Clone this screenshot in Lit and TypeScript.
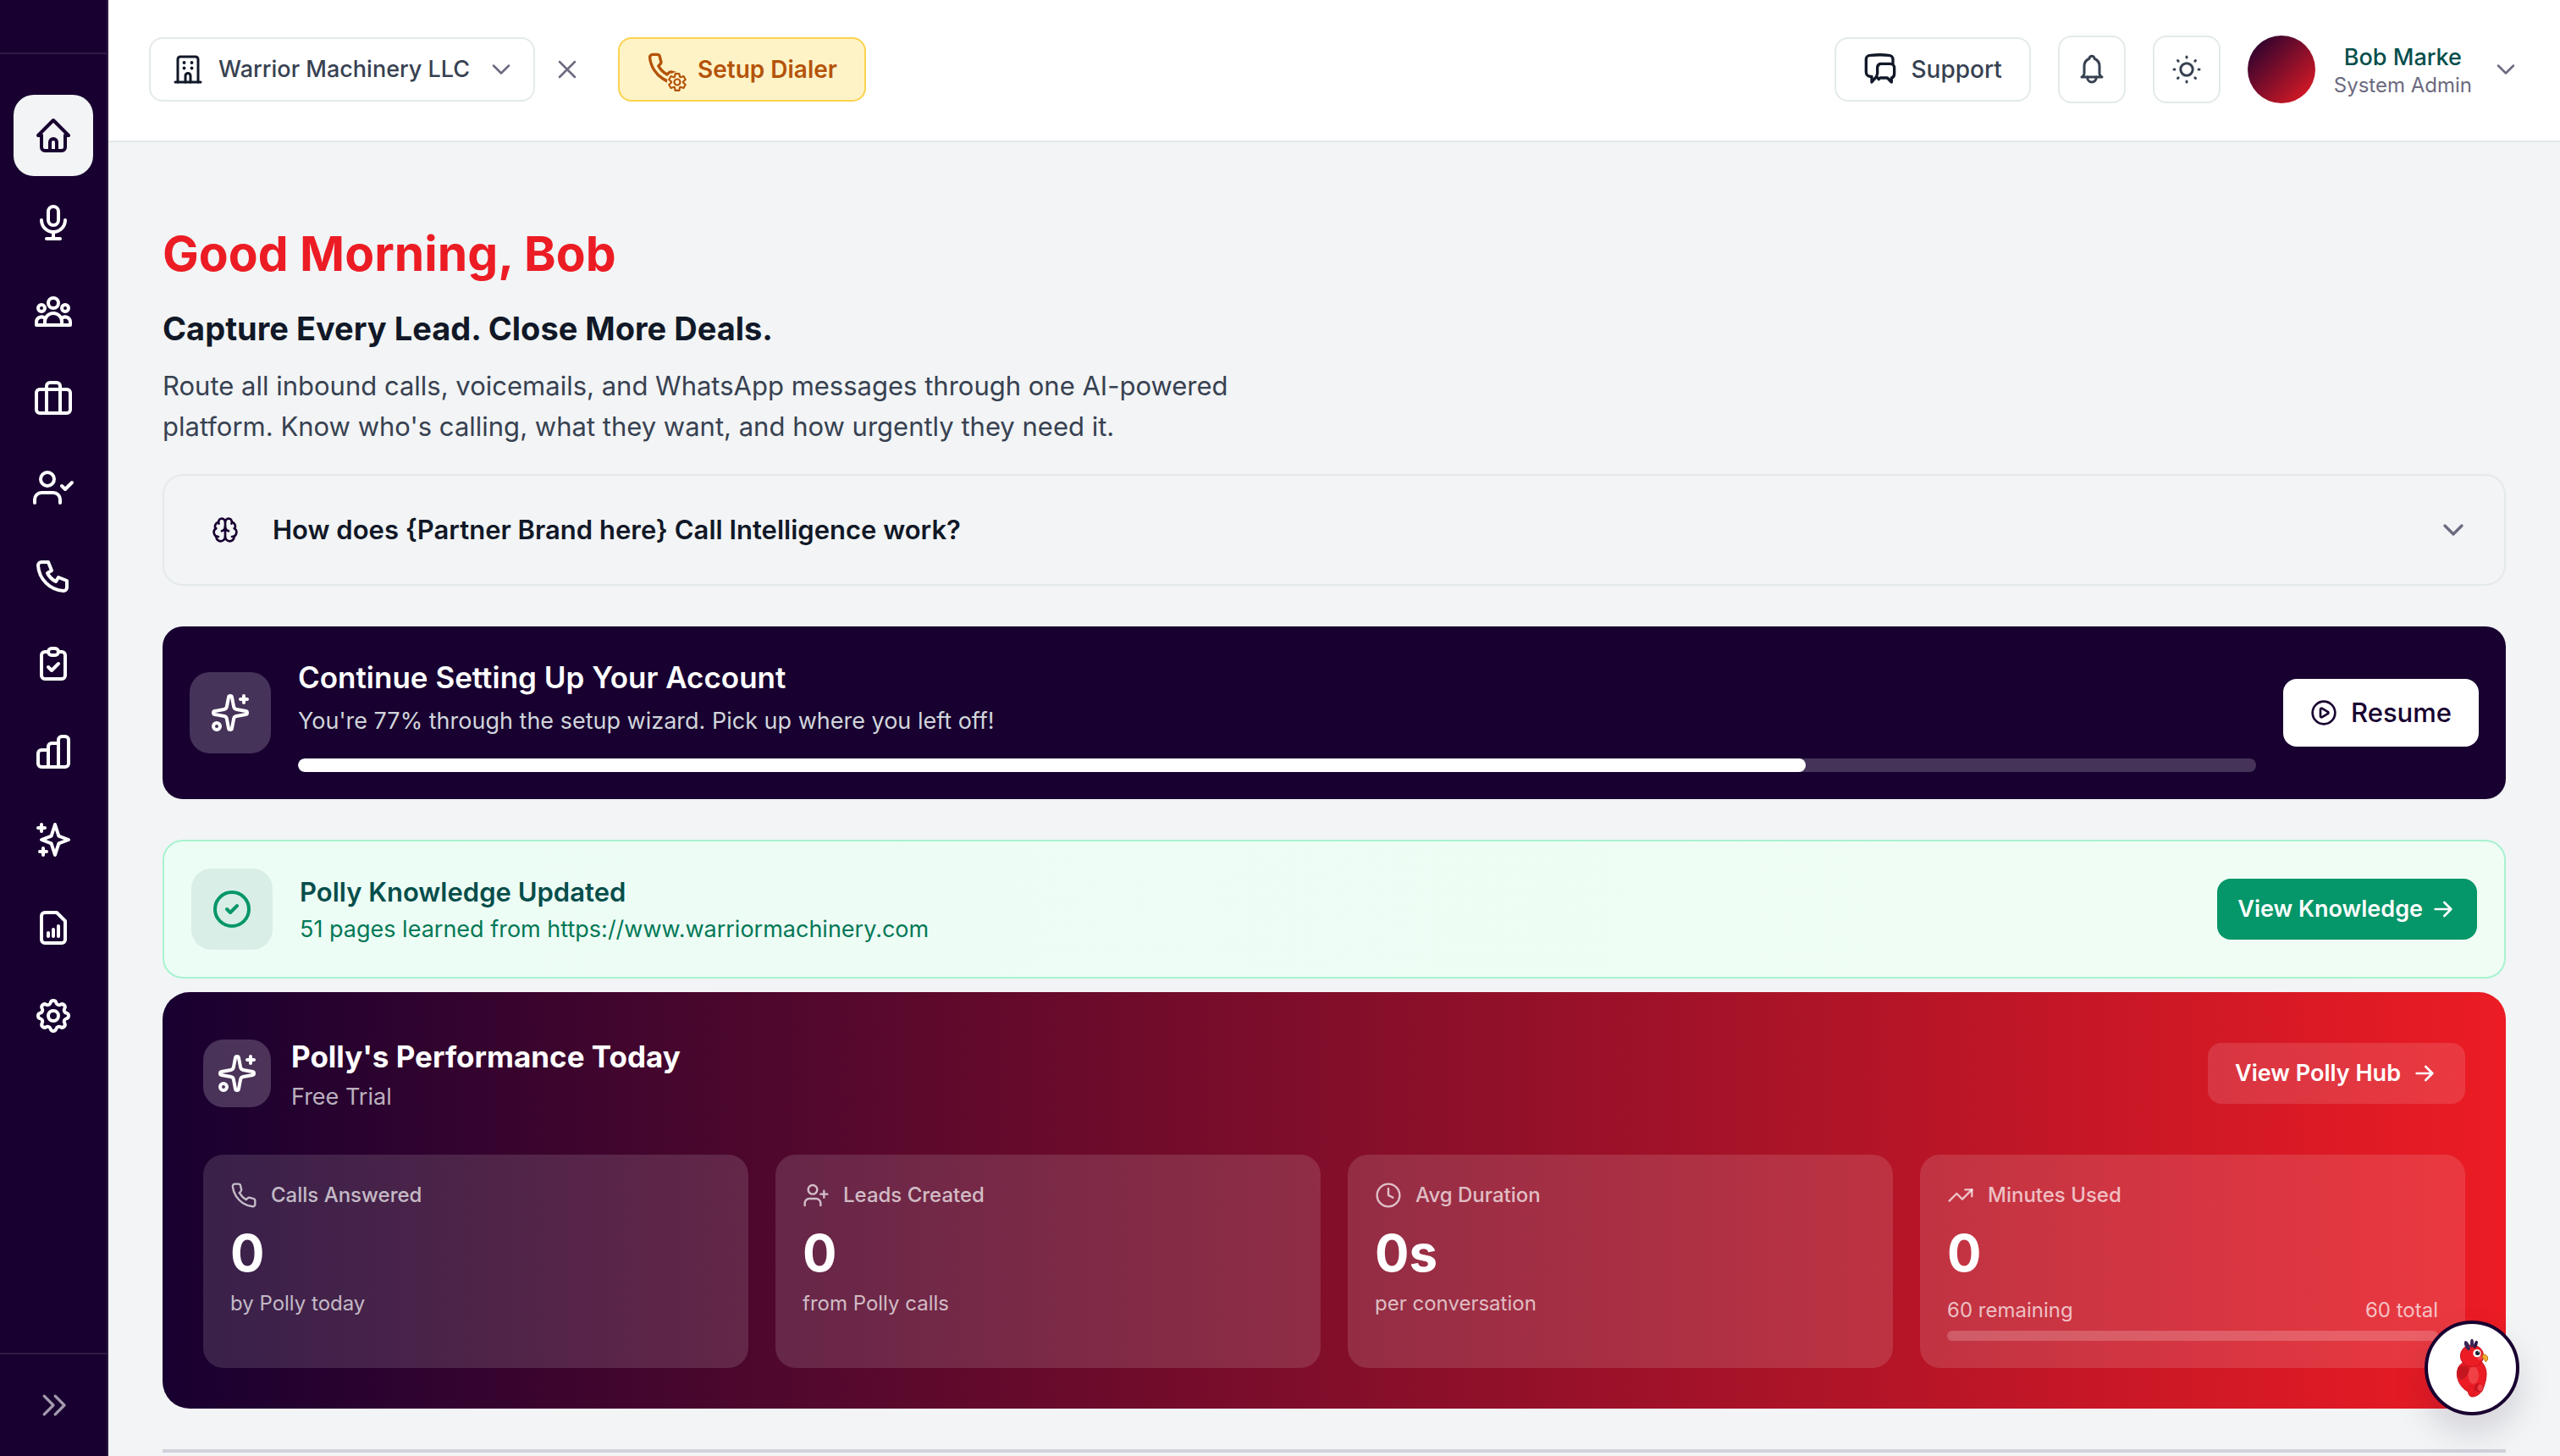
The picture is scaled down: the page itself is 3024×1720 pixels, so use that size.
import { LitElement, html, css, svg, type SVGTemplateResult } from "lit";
import { customElement, property, state } from "lit/decorators.js";

const p = (...paths: string[]) => paths.map((d) => svg`<path d=${d}></path>`);

const PHONE =
  "M22 16.92v3a2 2 0 0 1-2.18 2 19.79 19.79 0 0 1-8.63-3.07 19.5 19.5 0 0 1-6-6 19.79 19.79 0 0 1-3.07-8.67A2 2 0 0 1 4.11 2h3a2 2 0 0 1 2 1.72c.13.96.36 1.9.7 2.81a2 2 0 0 1-.45 2.11L8.09 9.91a16 16 0 0 0 6 6l1.27-1.27a2 2 0 0 1 2.11-.45c.91.34 1.85.57 2.81.7A2 2 0 0 1 22 16.92z";
const GEAR =
  "M10.325 4.317c.426-1.756 2.924-1.756 3.35 0a1.724 1.724 0 0 0 2.573 1.066c1.543-.94 3.31.826 2.37 2.37a1.724 1.724 0 0 0 1.065 2.572c1.756.426 1.756 2.924 0 3.35a1.724 1.724 0 0 0-1.066 2.573c.94 1.543-.826 3.31-2.37 2.37a1.724 1.724 0 0 0-2.572 1.065c-.426 1.756-2.924 1.756-3.35 0a1.724 1.724 0 0 0-2.573-1.066c-1.543.94-3.31-.826-2.37-2.37a1.724 1.724 0 0 0-1.065-2.572c-1.756-.426-1.756-2.924 0-3.35a1.724 1.724 0 0 0 1.066-2.573c-.94-1.543.826-3.31 2.37-2.37 1 .608 2.296.07 2.572-1.065z";

/** Outline of a six-toothed cog centred on the origin. */
const COG =
  "M" +
  Array.from({ length: 6 }, (_, k) =>
    [
      [-26, 7],
      [-13, 10.2],
      [13, 10.2],
      [26, 7],
    ].map(([turn, r]) => {
      const a = ((k * 60 - 90 + turn) * Math.PI) / 180;
      return `${(r * Math.cos(a)).toFixed(2)} ${(r * Math.sin(a)).toFixed(2)}`;
    }),
  )
    .flat()
    .join("L") +
  "Z";

const ICONS: Record<string, SVGTemplateResult[] | SVGTemplateResult> = {
  home: p(
    "M5 12H3l9-9 9 9h-2",
    "M5 12v7a2 2 0 0 0 2 2h10a2 2 0 0 0 2-2v-7",
    "M10 21v-5a2 2 0 0 1 2-2 2 2 0 0 1 2 2v5",
  ),
  mic: p(
    "M9 5a3 3 0 0 1 6 0v5a3 3 0 0 1-6 0z",
    "M5 10a7 7 0 0 0 14 0",
    "M8 21h8",
    "M12 17v4",
  ),
  group: svg`
    <circle cx="12" cy="7" r="3"></circle>
    <circle cx="5" cy="10" r="2"></circle>
    <circle cx="19" cy="10" r="2"></circle>
    <path d="M7 20v-2a5 5 0 0 1 10 0v2z"></path>
    <path d="M7 20H2v-2a3 3 0 0 1 5-2"></path>
    <path d="M17 20h5v-2a3 3 0 0 0-5-2"></path>`,
  briefcase: svg`
    <rect x="2" y="6" width="20" height="14" rx="2"></rect>
    <path d="M16 20V4a2 2 0 0 0-2-2h-4a2 2 0 0 0-2 2v16"></path>`,
  userCheck: svg`
    <path d="M16 21v-2a4 4 0 0 0-4-4H5a4 4 0 0 0-4 4v2"></path>
    <circle cx="8.5" cy="7" r="4"></circle>
    <path d="M17 11l2 2 4-4"></path>`,
  userPlus: svg`
    <path d="M16 21v-2a4 4 0 0 0-4-4H6a4 4 0 0 0-4 4v2"></path>
    <circle cx="9" cy="7" r="4"></circle>
    <path d="M19 8v6M22 11h-6"></path>`,
  handset: p(
    "M5 4h4l2 5-2.5 1.5a11 11 0 0 0 5 5L15 13l5 2v4a2 2 0 0 1-2 2A16 16 0 0 1 3 6a2 2 0 0 1 2-2",
  ),
  clipboard: p(
    "M9 5H7a2 2 0 0 0-2 2v12a2 2 0 0 0 2 2h10a2 2 0 0 0 2-2V7a2 2 0 0 0-2-2h-2",
    "M9 5a2 2 0 0 1 2-2h2a2 2 0 0 1 0 4h-2a2 2 0 0 1-2-2z",
    "M9 14l2 2 4-4",
  ),
  bars: p(
    "M9 21H5a2 2 0 0 1-2-2v-6a2 2 0 0 1 2-2h4z",
    "M15 21H9V9a2 2 0 0 1 2-2h4z",
    "M15 21V5a2 2 0 0 1 2-2h2a2 2 0 0 1 2 2v14a2 2 0 0 1-2 2z",
  ),
  stars: p(
    "M13 3l2.2 6.8L21 12l-5.8 2.2L13 21l-2.2-6.8L5 12l5.8-2.2z",
    "M5 3v4M3 5h4",
    "M6 17v4M4 19h4",
  ),
  report: p(
    "M14 3H7a2 2 0 0 0-2 2v14a2 2 0 0 0 2 2h10a2 2 0 0 0 2-2V8z",
    "M9 17v-2M12 17v-4M15 17v-6",
  ),
  gear: svg`<path d=${GEAR}></path><circle cx="12" cy="12" r="3"></circle>`,
  expand: p("M7 7l5 5-5 5", "M13 7l5 5-5 5"),
  chevron: p("M6 9l6 6 6-6"),
  close: p("M18 6L6 18M6 6l12 12"),
  arrow: p("M5 12h14M13 6l6 6-6 6"),
  building: svg`
    <path d="M2 22h20"></path>
    <path d="M4 22V4a2 2 0 0 1 2-2h12a2 2 0 0 1 2 2v18"></path>
    <path d="M10 22v-5a2 2 0 0 1 4 0v5"></path>
    <path stroke-width="2.6" d="M9 6.7h.01M15 6.7h.01M9 11h.01M15 11h.01"></path>`,
  dialer: svg`
    <mask id="cut" maskUnits="userSpaceOnUse" x="0" y="0" width="48" height="52">
      <rect width="48" height="52" fill="#fff" stroke="none"></rect>
      <circle cx="36" cy="39" r="12" fill="#000" stroke="none"></circle>
    </mask>
    <g mask="url(#cut)"><path transform="translate(0 3) scale(1.7)" d=${PHONE}></path></g>
    <g transform="translate(36 39)" stroke-width="2.2"><path d=${COG}></path><circle r="3.5"></circle></g>`,
  chats: p(
    "M9 17.5l-3 3.5v-4H5a3 3 0 0 1-3-3V5a3 3 0 0 1 3-3c5-.5 9-.5 13 0a3 3 0 0 1 3 3v3",
    "M12 8h7a3 3 0 0 1 3 3v4a3 3 0 0 1-2 3v3l-3-3h-5a2 2 0 0 0-1 1 3 3 0 0 1-1-4v-4a3 3 0 0 1 2-3z",
  ),
  bell: p(
    "M10 3.5a2 2 0 0 1 4 0 6.5 6.5 0 0 1 4 6v4.5a4 4 0 0 0 2 4H4a4 4 0 0 0 2-4V9.5a6.5 6.5 0 0 1 4-6",
    "M8.5 18v.5a3.5 3.5 0 0 0 7 0V18",
  ),
  sun: svg`
    <circle cx="12" cy="12" r="4.8"></circle>
    <path d="M12 2v.6M12 21.4v.6M2 12h.6M21.4 12h.6M5 5l.4.4M18.6 18.6l.4.4M19 5l-.4.4M5.4 18.6l-.4.4"></path>`,
  brain: p(
    "M12 18V5",
    "M15 13a4.17 4.17 0 0 1-3-4 4.17 4.17 0 0 1-3 4",
    "M17.598 6.5A3 3 0 1 0 12 5a3 3 0 1 0-5.598 1.5",
    "M17.997 5.125a4 4 0 0 1 2.526 5.77",
    "M18 18a4 4 0 0 0 2-7.464",
    "M19.967 17.483A4 4 0 1 1 12 18a4 4 0 1 1-7.967-.517",
    "M6 18a4 4 0 0 1-2-7.464",
    "M6.003 5.125a4 4 0 0 0-2.526 5.77",
  ),
  sparkle: svg`
    <path d="M11.017 2.814a1 1 0 0 1 1.966 0l1.051 5.558a2 2 0 0 0 1.594 1.594l5.558 1.051a1 1 0 0 1 0 1.966l-5.558 1.051a2 2 0 0 0-1.594 1.594l-1.051 5.558a1 1 0 0 1-1.966 0l-1.051-5.558a2 2 0 0 0-1.594-1.594l-5.558-1.051a1 1 0 0 1 0-1.966l5.558-1.051a2 2 0 0 0 1.594-1.594z"></path>
    <path d="M20 2v4M22 4h-4"></path>
    <circle cx="4" cy="20" r="2"></circle>`,
  play: svg`
    <circle cx="12" cy="12" r="10"></circle>
    <path d="M9 9a1 1 0 0 1 1.5-.9l5 3a1 1 0 0 1 0 1.8l-5 3A1 1 0 0 1 9 15z"></path>`,
  check: svg`<circle cx="12" cy="12" r="10"></circle><path d="M9 12l2 2 4-4"></path>`,
  phone: p(PHONE),
  clock: svg`<circle cx="12" cy="12" r="10"></circle><path d="M12 6v6l4 2"></path>`,
  trend: p("M22 7l-8.5 8.5-5-5L2 17", "M16 7h6v6"),
};

@customElement("ui-icon")
export class UiIcon extends LitElement {
  @property() name = "home";
  @property() box = "0 0 24 24";

  static styles = css`
    :host {
      display: block;
      flex: none;
      width: 32px;
      height: 32px;
      stroke-width: 2;
    }
    .glyph {
      display: block;
      width: 100%;
      height: 100%;
      fill: none;
      stroke: currentColor;
      stroke-linecap: round;
      stroke-linejoin: round;
      overflow: visible;
    }
  `;

  render() {
    return html`<svg class="glyph" viewBox=${this.box} aria-hidden="true">${ICONS[this.name]}</svg>`;
  }
}

@customElement("app-sidebar")
export class AppSidebar extends LitElement {
  @state() private active = "home";

  private items: [string, string][] = [
    ["home", "Home"],
    ["mic", "Assistant"],
    ["group", "Teams"],
    ["briefcase", "Business"],
    ["userCheck", "Leads"],
    ["handset", "Calls"],
    ["clipboard", "Tasks"],
    ["bars", "Analytics"],
    ["stars", "AI tools"],
    ["report", "Reports"],
    ["gear", "Settings"],
  ];

  static styles = css`
    :host {
      display: flex;
      flex-direction: column;
      flex: none;
      box-sizing: border-box;
      width: 128px;
      background: #180030;
      border-right: 2px solid #2f1a44;
      color: #fff;
    }
    .top {
      height: 62px;
      border-bottom: 2px solid #2f1a44;
    }
    .nav {
      display: flex;
      flex-direction: column;
      flex: 1;
      gap: 8px;
      padding: 48px 16px;
    }
    .item,
    .expand {
      display: flex;
      align-items: center;
      justify-content: center;
      color: inherit;
    }
    .item {
      height: 96px;
      border-radius: 24px;
    }
    .item ui-icon {
      width: 48px;
      height: 48px;
    }
    .active {
      background: #f2f4f5;
      color: #180030;
    }
    .expand {
      height: 122px;
      padding: 0;
      border: 0;
      border-top: 2px solid #2f1a44;
      background: none;
      color: #a39bad;
    }
    .expand ui-icon {
      width: 52px;
      height: 52px;
      stroke-width: 1.5;
    }
  `;

  render() {
    return html`
      <div class="top"></div>
      <nav class="nav">
        ${this.items.map(
          ([icon, label]) => html`<a
            class="item ${icon === this.active ? "active" : ""}"
            href="#${icon}"
            aria-label=${label}
            @click=${() => (this.active = icon)}
            ><ui-icon name=${icon}></ui-icon
          ></a>`,
        )}
      </nav>
      <button class="expand" aria-label="Expand menu"><ui-icon name="expand"></ui-icon></button>
    `;
  }
}

@customElement("app-header")
export class AppHeader extends LitElement {
  static styles = css`
    :host {
      display: flex;
      align-items: center;
      justify-content: space-between;
      padding: 42px 46px 44px 48px;
      background: #fff;
      border-bottom: 2px solid #e3e7ea;
      font-size: 27px;
      font-weight: 500;
      line-height: 40px;
      color: #374151;
    }
    .side,
    .company,
    .dialer,
    .support,
    .profile {
      display: flex;
      align-items: center;
    }
    .right {
      gap: 32px;
    }
    button,
    select {
      margin: 0;
      font: inherit;
      color: inherit;
    }
    .company,
    .dialer,
    .support,
    .square {
      box-sizing: border-box;
      border: 2px solid #e3eae9;
      border-radius: 16px;
      background: #fff;
    }
    .company,
    .dialer,
    .support {
      height: 76px;
    }
    .company {
      gap: 18px;
      padding: 0 20px 0 26px;
    }
    .company ui-icon,
    .close ui-icon,
    .profile ui-icon {
      width: 36px;
      height: 36px;
    }
    .company .building {
      color: #111827;
    }
    .company .caret,
    .close,
    .profile .caret {
      color: #6b6a80;
      stroke-width: 1.7;
    }
    .close ui-icon {
      stroke-width: 1.7;
    }
    .select {
      appearance: none;
      padding: 0;
      border: 0;
      background: none;
    }
    .close {
      margin: 0 42px 0 20px;
      padding: 0;
      border: 0;
      background: none;
    }
    .dialer {
      gap: 12px;
      padding: 0 32px;
      border-color: #fcd34d;
      background: #fef3c7;
      color: #b45309;
      font-size: 28px;
      font-weight: 600;
    }
    .dialer ui-icon {
      width: 48px;
      height: 48px;
    }
    .support {
      gap: 16px;
      padding: 0 32px;
      font-size: 28px;
    }
    .support ui-icon {
      width: 40px;
      height: 40px;
      color: #111827;
    }
    .square {
      display: flex;
      align-items: center;
      justify-content: center;
      width: 80px;
      height: 80px;
      padding: 0;
    }
    .square ui-icon {
      width: 36px;
      height: 36px;
    }
    .profile {
      gap: 22px;
      padding: 0;
      border: 0;
      background: none;
    }
    .avatar {
      width: 80px;
      height: 80px;
      border-radius: 50%;
      background: linear-gradient(135deg, #180030, #ec1c24);
    }
    .who {
      display: flex;
      flex-direction: column;
      align-items: center;
      padding-top: 4px;
    }
    .name {
      line-height: 34px;
      color: #064e4b;
    }
    .role {
      font-size: 24px;
      font-weight: 400;
      line-height: 32px;
      color: #6b6a80;
    }
  `;

  render() {
    return html`
      <div class="side">
        <label class="company">
          <ui-icon class="building" name="building"></ui-icon>
          <select class="select" aria-label="Company">
            <option>Warrior Machinery LLC</option>
          </select>
          <ui-icon class="caret" name="chevron"></ui-icon>
        </label>
        <button class="close" aria-label="Clear company"><ui-icon name="close"></ui-icon></button>
        <button class="dialer"><ui-icon name="dialer" box="0 0 48 48"></ui-icon>Setup Dialer</button>
      </div>
      <div class="side right">
        <button class="support"><ui-icon name="chats"></ui-icon>Support</button>
        <button class="square" aria-label="Notifications"><ui-icon name="bell"></ui-icon></button>
        <button class="square" aria-label="Theme"><ui-icon name="sun"></ui-icon></button>
        <button class="profile">
          <span class="avatar"></span>
          <span class="who"><span class="name">Bob Marke</span><span class="role">System Admin</span></span>
          <ui-icon class="caret" name="chevron"></ui-icon>
        </button>
      </div>
    `;
  }
}

interface Stat {
  icon: string;
  label: string;
  value: string;
  note: string;
}

@customElement("app-dashboard")
export class AppDashboard extends LitElement {
  private progress = 77;
  private stats: Stat[] = [
    { icon: "phone", label: "Calls Answered", value: "0", note: "by Polly today" },
    { icon: "userPlus", label: "Leads Created", value: "0", note: "from Polly calls" },
    { icon: "clock", label: "Avg Duration", value: "0s", note: "per conversation" },
  ];

  static styles = css`
    :host {
      display: flex;
      flex-direction: column;
      padding: 96px 64px 0;
      font-size: 27px;
      line-height: 40px;
    }
    h1,
    h2,
    h3,
    p {
      margin: 0;
    }
    button {
      margin: 0;
      border: 0;
      font: inherit;
      cursor: pointer;
    }
    .hello {
      font-size: 57px;
      font-weight: 700;
      line-height: 72px;
      color: #ec1c24;
    }
    .tagline {
      margin-top: 24px;
      font-size: 38px;
      font-weight: 700;
      line-height: 56px;
      color: #111827;
    }
    .intro {
      max-width: 1344px;
      margin-top: 16px;
      font-size: 31px;
      line-height: 48px;
      color: #374151;
    }
    .faq {
      display: flex;
      align-items: center;
      gap: 40px;
      margin-top: 32px;
      padding: 40px;
      padding-left: 56px;
      border: 2px solid #e3eae9;
      border-radius: 24px;
      background: none;
      font-size: 31px;
      font-weight: 600;
      line-height: 48px;
      text-align: left;
      color: #111827;
    }
    .faq .q {
      flex: 1;
    }
    .faq .brain {
      color: #180030;
    }
    .faq .caret {
      width: 40px;
      height: 40px;
      color: #6b6a80;
    }
    .setup {
      display: flex;
      align-items: center;
      gap: 32px;
      margin-top: 48px;
      padding: 32px;
      border-radius: 24px;
      background: #180030;
      color: #fff;
    }
    .tile {
      display: flex;
      align-items: center;
      justify-content: center;
      flex: none;
      width: 96px;
      height: 96px;
      border-radius: 24px;
      background: rgba(255, 255, 255, 0.2);
    }
    .tile ui-icon {
      width: 48px;
      height: 48px;
    }
    .body {
      flex: 1;
    }
    .title {
      font-size: 35px;
      font-weight: 600;
      line-height: 56px;
    }
    .setup .sub {
      margin-top: 4px;
      color: #d1d5db;
    }
    .track {
      height: 16px;
      margin-top: 24px;
      border-radius: 8px;
      background: rgba(255, 255, 255, 0.2);
      overflow: hidden;
    }
    .fill {
      height: 100%;
      border-radius: 8px;
      background: #fff;
    }
    .resume,
    .knowledge,
    .hub {
      display: flex;
      align-items: center;
      border-radius: 16px;
      font-weight: 600;
    }
    .resume {
      gap: 16px;
      height: 80px;
      padding: 0 32px;
      background: #fff;
      font-size: 31px;
      font-weight: 500;
      color: #180030;
    }
    .updated {
      display: flex;
      align-items: center;
      gap: 32px;
      margin-top: 48px;
      padding: 32px;
      border: 2px solid #a7f3d0;
      border-radius: 24px;
      background: linear-gradient(90deg, #ecfdf5, #f0fdf4);
    }
    .updated .tile {
      background: #d9eee6;
      color: #059669;
    }
    .updated .title {
      font-size: 31px;
      line-height: 48px;
      color: #064e4b;
    }
    .updated .sub {
      color: #047857;
    }
    .knowledge {
      gap: 8px;
      height: 72px;
      padding: 0 24px;
      background: #059669;
      color: #fff;
    }
    .performance {
      display: flex;
      flex-direction: column;
      gap: 48px;
      margin-top: 16px;
      padding: 48px;
      border-radius: 32px;
      background: linear-gradient(90deg, #180030, #ec1c24);
      color: #fff;
    }
    .head {
      display: flex;
      align-items: center;
      gap: 24px;
    }
    .head .tile {
      width: 80px;
      height: 80px;
    }
    .head .title {
      font-weight: 700;
    }
    .head .sub {
      color: rgba(255, 255, 255, 0.7);
    }
    .hub {
      gap: 12px;
      height: 72px;
      padding: 0 32px;
      background: rgba(255, 255, 255, 0.13);
      color: #fff;
    }
    .stats {
      display: grid;
      grid-template-columns: repeat(4, 1fr);
      gap: 32px;
    }
    .stat {
      padding: 32px;
      border-radius: 24px;
      background: rgba(255, 255, 255, 0.13);
      font-size: 24px;
      line-height: 32px;
      color: rgba(255, 255, 255, 0.7);
    }
    .label {
      display: flex;
      align-items: center;
      gap: 16px;
      font-weight: 500;
    }
    .label ui-icon {
      stroke-width: 1.8;
    }
    .value {
      margin-top: 16px;
      font-size: 60px;
      font-weight: 700;
      line-height: 72px;
      color: #fff;
    }
    .note {
      margin-top: 8px;
    }
    .minutes {
      display: flex;
      justify-content: space-between;
      margin-top: 16px;
    }
    .meter {
      height: 12px;
      margin-top: 8px;
      border-radius: 6px;
      background: rgba(255, 255, 255, 0.2);
    }
    .rule {
      width: 100%;
      height: 4px;
      margin: 48px 0 0;
      border: 0;
      background: #d0d2dc;
    }
  `;

  render() {
    return html`
      <h1 class="hello">Good Morning, Bob</h1>
      <h2 class="tagline">Capture Every Lead. Close More Deals.</h2>
      <p class="intro">
        Route all inbound calls, voicemails, and WhatsApp messages through one AI-powered platform. Know who's
        calling, what they want, and how urgently they need it.
      </p>
      <button class="faq" aria-expanded="false">
        <ui-icon class="brain" name="brain"></ui-icon>
        <span class="q">How does {Partner Brand here} Call Intelligence work?</span>
        <ui-icon class="caret" name="chevron"></ui-icon>
      </button>

      <section class="setup">
        <div class="tile"><ui-icon name="sparkle"></ui-icon></div>
        <div class="body">
          <h3 class="title">Continue Setting Up Your Account</h3>
          <p class="sub">You're ${this.progress}% through the setup wizard. Pick up where you left off!</p>
          <div class="track"><div class="fill" style="width: ${this.progress}%"></div></div>
        </div>
        <button class="resume"><ui-icon name="play"></ui-icon>Resume</button>
      </section>

      <section class="updated">
        <div class="tile"><ui-icon name="check"></ui-icon></div>
        <div class="body">
          <h3 class="title">Polly Knowledge Updated</h3>
          <p class="sub">51 pages learned from https://www.warriormachinery.com</p>
        </div>
        <button class="knowledge">View Knowledge<ui-icon name="arrow"></ui-icon></button>
      </section>

      <section class="performance">
        <div class="head">
          <div class="tile"><ui-icon name="sparkle"></ui-icon></div>
          <div class="body">
            <h3 class="title">Polly's Performance Today</h3>
            <p class="sub">Free Trial</p>
          </div>
          <button class="hub">View Polly Hub<ui-icon name="arrow"></ui-icon></button>
        </div>
        <div class="stats">
          ${this.stats.map(
            (s) => html`<div class="stat">
              <div class="label"><ui-icon name=${s.icon}></ui-icon>${s.label}</div>
              <div class="value">${s.value}</div>
              <div class="note">${s.note}</div>
            </div>`,
          )}
          <div class="stat">
            <div class="label"><ui-icon name="trend"></ui-icon>Minutes Used</div>
            <div class="value">0</div>
            <div class="minutes"><span>60 remaining</span><span>60 total</span></div>
            <div class="meter"></div>
          </div>
        </div>
      </section>
      <hr class="rule" />
    `;
  }
}

@customElement("polly-button")
export class PollyButton extends LitElement {
  static styles = css`
    :host {
      position: absolute;
      right: 48px;
      bottom: 48px;
    }
    .fab {
      display: block;
      box-sizing: border-box;
      width: 112px;
      height: 112px;
      padding: 0;
      border: 4px solid #180030;
      border-radius: 50%;
      background: #fff;
      box-shadow: 0 20px 40px rgba(24, 0, 48, 0.14);
    }
    .bird {
      display: block;
      width: 104px;
      height: 104px;
    }
  `;

  render() {
    return html`<button class="fab" aria-label="Ask Polly">
      <svg class="bird" viewBox="54 42 312 312" aria-hidden="true">
        <path
          d="M176 180C158 192 153 216 160 238C166 258 182 276 197 282C198 292 203 300 212 300C224 300 240 290 248 276C252 262 262 244 261 214C260 198 252 186 246 178Z"
          fill="#ec1c24"
          stroke="#c4161f"
          stroke-width="3"
        />
        <ellipse cx="215" cy="224" rx="19" ry="31" fill="#ef4146" />
        <path d="M166 193C180 186 198 190 200 203C198 220 188 234 172 240C158 232 156 206 166 193Z" fill="#c4161f" />
        <circle cx="233" cy="268" r="15" fill="#c4161f" />
        <ellipse cx="239" cy="268" rx="9" ry="12" fill="#ee3c42" />
        <ellipse cx="207" cy="280" rx="10" ry="19" fill="#ec1c24" stroke="#c4161f" stroke-width="2" />
        <ellipse cx="210" cy="155" rx="41" ry="39" fill="#ec1c24" stroke="#c4161f" stroke-width="3" />
        <ellipse cx="193" cy="119" rx="8" ry="18" transform="rotate(-24 193 119)" fill="#3b2456" />
        <ellipse cx="210" cy="110" rx="6" ry="15" fill="#3b2456" />
        <ellipse cx="223" cy="115" rx="6" ry="14" transform="rotate(20 223 115)" fill="#2c1448" />
        <circle cx="238" cy="162" r="8" fill="#f0484c" />
        <path d="M248 150C258 149 267 156 266 165C265 171 262 175 258 176C258 168 248 168 247 160Z" fill="#f3ae2b" stroke="#b9700f" stroke-width="3" />
        <circle cx="228" cy="146" r="14" fill="#fff" />
        <circle cx="230" cy="145" r="8" fill="#10202c" />
        <circle cx="233" cy="141" r="2" fill="#fff" />
      </svg>
    </button>`;
  }
}

@customElement("app-root")
export class AppRoot extends LitElement {
  static styles = css`
    :host {
      position: relative;
      display: flex;
      height: 100vh;
      overflow: hidden;
      background: #f2f4f5;
      font-family: Inter, "Liberation Sans", sans-serif;
    }
    .page {
      flex: 1;
      min-width: 0;
      overflow: hidden;
    }
  `;

  render() {
    return html`
      <app-sidebar></app-sidebar>
      <main class="page">
        <app-header></app-header>
        <app-dashboard></app-dashboard>
      </main>
      <polly-button></polly-button>
    `;
  }
}
